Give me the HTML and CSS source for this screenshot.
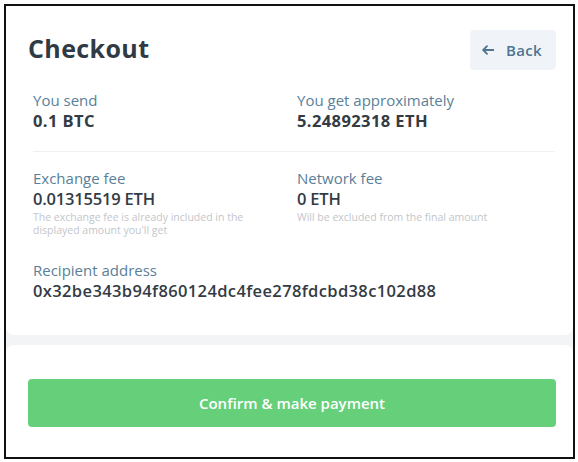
FILE: index.html
```html
<!DOCTYPE html>
<html>
<head>
<meta charset="utf-8">
<link rel="stylesheet" href="styles.css">
</head>
<body>
<div class="frame">
  <div class="card card-top">
    <div class="header">
      <h1 class="title">Checkout</h1>
      <button class="back">
        <svg class="back-icon" width="12" height="10" viewBox="0 0 12 10"><path d="M11.5 5H1.5M5 1.2L1.2 5L5 8.8" fill="none" stroke="#4f7590" stroke-width="1.8" stroke-linecap="round" stroke-linejoin="round"/></svg>
        <span>Back</span>
      </button>
    </div>
    <div class="details">
      <div class="row row-first">
        <div class="field">
          <div class="label">You send</div>
          <div class="value value-bold">0.1 BTC</div>
        </div>
        <div class="field">
          <div class="label">You get approximately</div>
          <div class="value value-bold">5.24892318 ETH</div>
        </div>
      </div>
      <div class="row row-second">
        <div class="field">
          <div class="label">Exchange fee</div>
          <div class="value value-big">0.01315519 ETH</div>
          <div class="note">The exchange fee is already included in the<br>displayed amount you'll get</div>
        </div>
        <div class="field">
          <div class="label">Network fee</div>
          <div class="value value-big">0 ETH</div>
          <div class="note">Will be excluded from the final amount</div>
        </div>
      </div>
      <div class="recipient">
        <div class="label">Recipient address</div>
        <div class="value value-big value-address">0x32be343b94f860124dc4fee278fdcbd38c102d88</div>
      </div>
    </div>
  </div>
  <div class="card card-bottom">
    <button class="confirm">Confirm &amp; make payment</button>
  </div>
</div>
</body>
</html>
```

FILE: styles.css
```css
* { box-sizing: border-box; }
html, body { margin: 0; padding: 0; background: #fff; }
body { font-family: "Open Sans", "Liberation Sans", sans-serif; color: #333b44; }

.frame {
  margin: 4px 0 0 4px;
  width: 571px;
  height: 455px;
  border: 2px solid #111;
  background: #f3f4f6;
  display: flex;
  flex-direction: column;
  gap: 10px;
}

.card { background: #fff; }
.card-top {
  height: 329px;
  padding: 24px 17px 0 22px;
  border-radius: 0 0 8px 8px;
}
.card-bottom {
  flex: 1;
  padding: 34px 17px 0 22px;
  border-radius: 8px 8px 0 0;
}

.header {
  display: flex;
  justify-content: space-between;
  align-items: center;
  height: 40px;
}
.title {
  margin: 0;
  font-size: 25px;
  font-weight: 700;
  color: #2f3a45;
  letter-spacing: 0.4px;
  position: relative;
  top: -2px;
}
.back {
  width: 86px;
  height: 40px;
  border: none;
  border-radius: 4px;
  background: #f0f4f8;
  color: #4f7590;
  font-family: inherit;
  font-size: 15px;
  font-weight: 600;
  letter-spacing: 0.3px;
  display: flex;
  align-items: center;
  padding: 0 0 0 12px;
  gap: 12px;
}

.details { padding: 21px 1px 0 5px; }
.row {
  display: grid;
  grid-template-columns: 264px 1fr;
}
.row-first {
  padding-bottom: 19px;
  border-bottom: 1px solid #eef0f2;
}
.row-second { padding-top: 17px; }

.label {
  font-size: 15px;
  line-height: 19px;
  color: #5a7f98;
}
.value {
  color: #333b44;
}
.value-bold {
  font-size: 16.5px;
  line-height: 22px;
  font-weight: 700;
  letter-spacing: 0.4px;
}
.value-big {
  font-size: 16.5px;
  line-height: 22px;
  font-weight: 600;
}
.row-second .value-big { font-size: 16.5px; letter-spacing: -0.2px; }
.value-address { letter-spacing: 0.37px; }
.note {
  margin-top: 1px;
  font-size: 10.5px;
  line-height: 12.5px;
  color: #c3c6ca;
}
.recipient { padding-top: 25px; }

.confirm {
  width: 100%;
  height: 48px;
  border: none;
  border-radius: 4px;
  background: #66cf7a;
  color: #fff;
  font-family: inherit;
  font-size: 15px;
  font-weight: 600;
}
```
